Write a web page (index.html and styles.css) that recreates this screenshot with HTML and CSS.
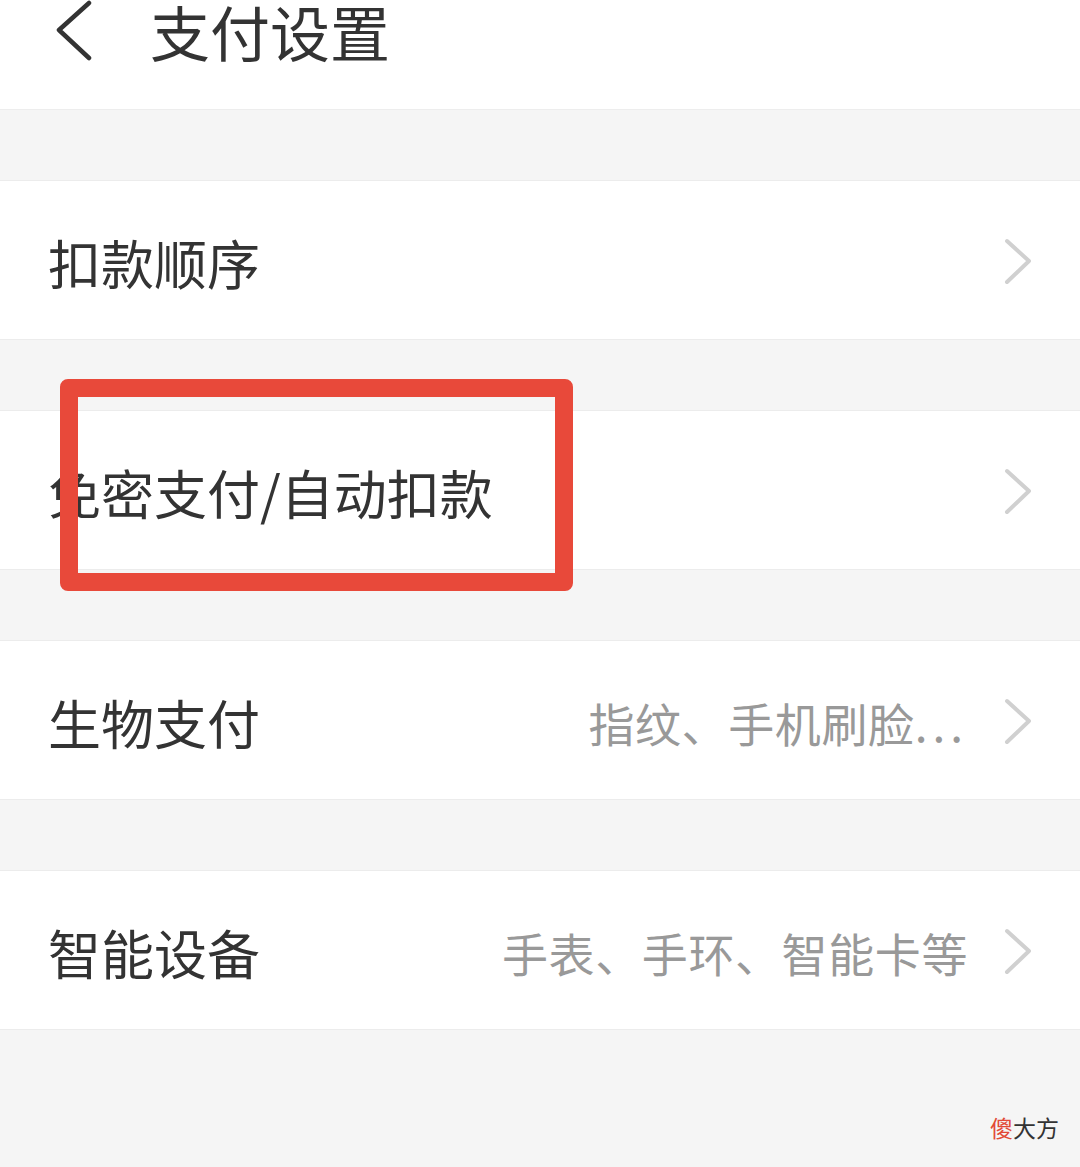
FILE: index.html
```html
<!DOCTYPE html>
<html lang="zh-CN">
<head>
  <meta charset="UTF-8" />
  <title>支付设置</title>
  <link rel="stylesheet" href="styles.css">
</head>
<body>
  <div class="page">
    <div class="topbar">
      <svg class="back" width="42" height="62" viewBox="0 0 42 62">
        <polyline points="34,3 4,30 34,58" fill="none" stroke="#333" stroke-width="4.5" stroke-linecap="round" stroke-linejoin="round" />
      </svg>
      <h1>支付设置</h1>
    </div>

    <div class="spacer"></div>

    <div class="row">
      <span class="label">扣款顺序</span>
      <span class="chevron"><svg width="32" height="50" viewBox="0 0 32 50"><polyline points="5,4 27,24 5,45" fill="none" stroke="#d0d0d0" stroke-width="4" stroke-linecap="round" stroke-linejoin="round" /></svg></span>
    </div>

    <div class="spacer"></div>

    <div class="row">
      <span class="label">免密支付/自动扣款</span>
      <span class="chevron"><svg width="32" height="50" viewBox="0 0 32 50"><polyline points="5,4 27,24 5,45" fill="none" stroke="#d0d0d0" stroke-width="4" stroke-linecap="round" stroke-linejoin="round" /></svg></span>
    </div>

    <div class="spacer"></div>

    <div class="row">
      <span class="label">生物支付</span>
      <span class="value">指纹、手机刷脸<span class="dots">...</span></span>
      <span class="chevron"><svg width="32" height="50" viewBox="0 0 32 50"><polyline points="5,4 27,24 5,45" fill="none" stroke="#d0d0d0" stroke-width="4" stroke-linecap="round" stroke-linejoin="round" /></svg></span>
    </div>

    <div class="spacer"></div>

    <div class="row">
      <span class="label">智能设备</span>
      <span class="value">手表、手环、智能卡等</span>
      <span class="chevron"><svg width="32" height="50" viewBox="0 0 32 50"><polyline points="5,4 27,24 5,45" fill="none" stroke="#d0d0d0" stroke-width="4" stroke-linecap="round" stroke-linejoin="round" /></svg></span>
    </div>

    <!-- annotation drawn over the second row -->
    <div class="highlight"></div>

    <div class="watermark"><span class="mark-red">傻</span>大方</div>
  </div>
</body>
</html>
```

FILE: styles.css
```css
/*
  ---------------------
  GLOBAL STYLES
  ---------------------
*/
* {
  margin: 0;
  padding: 0;
  box-sizing: border-box;
}

body {
  background: #f5f5f5;
  font-family: "Noto Sans CJK SC", "Noto Sans", sans-serif;
  color: #333;
}

.page {
  position: relative;
  width: 1080px;
  height: 1167px;
  overflow: hidden;
  background: #f5f5f5;
}

/*
  ---------------------
  TOP BAR
  ---------------------
*/
.topbar {
  height: 110px;
  background: #fff;
  border-bottom: 1px solid #ededed;
  display: flex;
  align-items: flex-start;
  padding-left: 55px;
  gap: 53px;
}

.back {
  display: block;
}

.topbar h1 {
  font-size: 60px;
  font-weight: 400;
  line-height: 58px;
  margin-top: 2px;
  color: #333;
}

/*
  ---------------------
  LIST ROWS
  ---------------------
*/
.spacer {
  height: 70px;
}

.row {
  height: 160px;
  background: #fff;
  border-top: 1px solid #ececec;
  border-bottom: 1px solid #ececec;
  display: flex;
  align-items: center;
  padding: 4px 46px 0 48px;
}

.label {
  font-size: 53px;
  line-height: 1;
  color: #333;
  flex: 1;
  white-space: nowrap;
}

.value {
  font-size: 46px;
  line-height: 1;
  color: #999;
  margin-right: 34px;
  letter-spacing: 0.6px;
  white-space: nowrap;
}

.dots {
  letter-spacing: 5px;
}

.chevron {
  display: flex;
  align-items: center;
}

/*
  ---------------------
  OVERLAYS
  ---------------------
*/
.highlight {
  position: absolute;
  left: 60px;
  top: 379px;
  width: 513px;
  height: 212px;
  border: 18px solid #e8493a;
  border-radius: 8px;
}

.watermark {
  position: absolute;
  left: 990px;
  top: 1110px;
  font-size: 23px;
  line-height: 34px;
  color: #333;
}

.mark-red {
  color: #e24a36;
}
```
